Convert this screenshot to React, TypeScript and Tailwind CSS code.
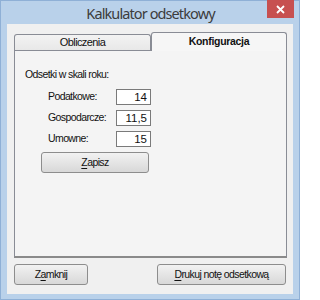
export default function App() {
  const rates = [
    { label: "Podatkowe:", value: "14" },
    { label: "Gospodarcze:", value: "11,5" },
    { label: "Umowne:", value: "15" },
  ];

  return (
    <div className="w-[300px] h-[300px] flex flex-col bg-[#b9d1ea] border border-[#8fb0d6] font-['Liberation_Sans',Arial,sans-serif] text-[10.5px] tracking-[-0.6px] text-[#111]">
      {/* title bar */}
      <div className="h-[23px] flex items-start pl-[6px] pr-[5px]">
        <div className="w-[27px]" />
        <div className="flex-1 text-center text-[14.5px] tracking-[-0.9px] leading-[25px] text-[#3c3c3c] font-['Noto_Sans',sans-serif]">
          Kalkulator odsetkowy
        </div>
        <div className="w-[27px] h-[18px] bg-[#c75050] flex items-center justify-center -mt-[1px]">
          <svg width="9" height="9" viewBox="0 0 9 9">
            <path d="M1 1L8 8M8 1L1 8" stroke="white" strokeWidth="1.8" />
          </svg>
        </div>
      </div>

      {/* client area */}
      <div className="flex-1 flex flex-col bg-[#f0f0f0] mx-[6px] mb-[5px] pt-[8px] pl-[7px] pr-[6px] pb-[9px]">
        {/* tabs */}
        <div className="flex items-end h-[18px] relative z-10">
          <div className="w-[137px] h-[16px] border border-b-0 border-[#898c95] rounded-t-[3px] bg-gradient-to-b from-[#f3f3f3] to-[#e8e8e8] flex items-center justify-center text-[11px] leading-none">
            Obliczenia
          </div>
          <div className="w-[136px] h-[19px] -mb-[1px] border border-b-0 border-[#898c95] rounded-t-[3px] bg-[#f6f6f6] flex items-center justify-center font-bold tracking-[-0.3px] leading-none pb-[2px]">
            Konfiguracja
          </div>
        </div>

        {/* pane */}
        <div className="h-[208px] border border-[#898c95] border-b-2 border-b-[#8a8a8a] bg-[#f4f4f4] pl-[10px] pt-[16px] flex flex-col">
          <div className="leading-[14px]">Odsetki w skali roku:</div>
          <div className="flex flex-col gap-[4px] mt-[7px] pl-[23px]">
            {rates.map((r) => (
              <div key={r.label} className="flex items-center h-[17px]">
                <div className="w-[68px]">{r.label}</div>
                <div className="w-[35px] h-[16px] bg-white border border-[#7a7a7a] text-right text-[11.5px] tracking-normal pr-[3px] leading-[14px]">
                  {r.value}
                </div>
              </div>
            ))}
          </div>
          <button className="mt-[5px] ml-[16px] w-[108px] h-[21px] rounded-[3px] border border-[#8d8d8d] bg-gradient-to-b from-[#f2f2f2] to-[#d8d8d8] leading-none">
            <span className="underline underline-offset-2">Z</span>apisz
          </button>
        </div>

        {/* bottom buttons */}
        <div className="flex justify-between mt-[6px] pr-[1px]">
          <button className="w-[74px] h-[21px] rounded-[3px] border border-[#8d8d8d] bg-gradient-to-b from-[#f2f2f2] to-[#d8d8d8] leading-none">
            Z<span className="underline underline-offset-2">a</span>mknij
          </button>
          <button className="w-[129px] h-[21px] rounded-[3px] border border-[#8d8d8d] bg-gradient-to-b from-[#f2f2f2] to-[#d8d8d8] leading-none">
            <span className="underline underline-offset-2">D</span>rukuj notę odsetkową
          </button>
        </div>
      </div>
    </div>
  );
}
